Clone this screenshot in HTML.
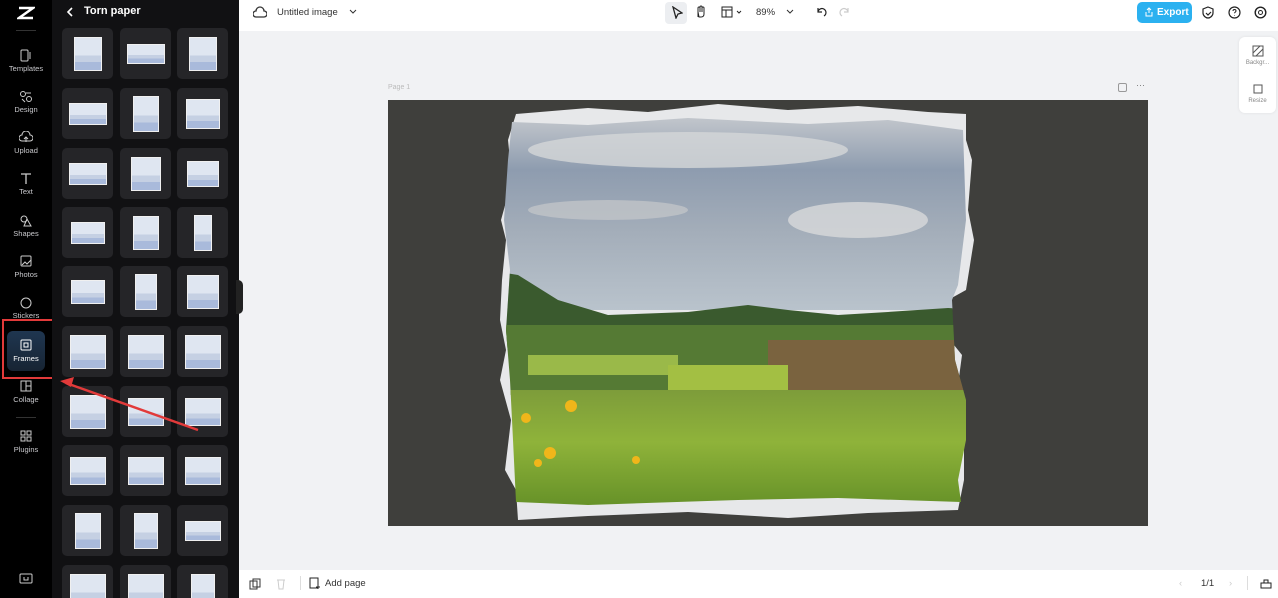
<!DOCTYPE html>
<html><head><meta charset="utf-8"><style>
*{margin:0;padding:0;box-sizing:border-box}
html{width:1278px;height:598px;overflow:hidden}
body{width:1278px;height:598px;overflow:hidden;background:#f1f2f4;font-family:"Liberation Sans",sans-serif;position:relative}
.rail{position:absolute;left:0;top:0;width:52px;height:598px;background:#000}
.panel{position:absolute;left:52px;top:0;width:187px;height:598px;background:#111113;overflow:hidden}
.ri{position:absolute;left:0;width:52px;text-align:center;color:#c8c8cc;font-size:7.5px}
.ri svg{display:block;margin:0 auto 2px}
.tile{position:absolute;width:51px;height:51px;background:#252528;border-radius:5px}
.tile i{position:absolute;background:linear-gradient(#dfe6f1 0 55%,#c5d0e3 55% 75%,#a9badb 75% 100%);border:1.5px solid #f0f0f0}
.top{position:absolute;left:239px;top:0;right:0;height:31px;background:#fff}
.bot{position:absolute;left:239px;top:570px;right:0;height:28px;background:#fff}
.t{position:absolute;font-size:9.5px;color:#333}
</style></head><body>
<div class="rail">
 <svg style="position:absolute;left:17px;top:6px" width="18" height="14" viewBox="0 0 18 14"><path d="M2 2h14L2 12h14" stroke="#fff" stroke-width="2.5" fill="none"/></svg>
 <div style="position:absolute;left:16px;top:30px;width:20px;height:1px;background:#333"></div>
 <div class="ri" style="top:49px"><svg width="14" height="13"><rect x="2" y="1" width="7" height="11" rx="1" stroke="#ccc" fill="none"/><path d="M11 3v7" stroke="#ccc"/></svg>Templates</div>
 <div class="ri" style="top:90px"><svg width="14" height="13"><circle cx="4" cy="4" r="2.5" stroke="#ccc" fill="none"/><circle cx="10" cy="9" r="2.5" stroke="#ccc" fill="none"/><path d="M7 3l5 0M3 9l3 3" stroke="#ccc"/></svg>Design</div>
 <div class="ri" style="top:131px"><svg width="14" height="13"><path d="M3 10a3 3 0 010-6 4 4 0 018 0 3 3 0 010 6zM7 11V6M5 8l2-2 2 2" stroke="#ccc" fill="none"/></svg>Upload</div>
 <div class="ri" style="top:172px"><svg width="14" height="13"><path d="M2 2h10M7 2v10" stroke="#ccc" stroke-width="1.3"/></svg>Text</div>
 <div class="ri" style="top:214px"><svg width="14" height="13"><circle cx="5" cy="5" r="3" stroke="#ccc" fill="none"/><path d="M8 5l4 7H5z" stroke="#ccc" fill="none"/></svg>Shapes</div>
 <div class="ri" style="top:255px"><svg width="14" height="13"><rect x="2" y="1" width="10" height="10" rx="1" stroke="#ccc" fill="none"/><path d="M3 10l3-3 2 2 4-4" stroke="#ccc" fill="none"/></svg>Photos</div>
 <div class="ri" style="top:296px"><svg width="14" height="13"><circle cx="7" cy="7" r="5" stroke="#ccc" fill="none"/></svg>Stickers</div>
 <div style="position:absolute;left:7px;top:331px;width:38px;height:40px;border-radius:6px;background:linear-gradient(#1f3650,#172433)"></div>
 <div class="ri" style="top:339px;color:#fff"><svg width="14" height="13"><rect x="2" y="1" width="10" height="10" rx="1" stroke="#fff" fill="none"/><rect x="5" y="4" width="4" height="4" stroke="#fff" fill="none"/></svg>Frames</div>
 <div style="position:absolute;left:2px;top:319px;width:60px;height:60px;border:2px solid #e23a3a"></div>
 <div class="ri" style="top:380px"><svg width="14" height="13"><rect x="2" y="1" width="10" height="10" stroke="#ccc" fill="none"/><path d="M7 1v10M7 6h5" stroke="#ccc"/></svg>Collage</div>
 <div style="position:absolute;left:16px;top:417px;width:20px;height:1px;background:#333"></div>
 <div class="ri" style="top:430px"><svg width="14" height="13"><rect x="2" y="1" width="4" height="4" stroke="#ccc" fill="none"/><rect x="8" y="1" width="4" height="4" stroke="#ccc" fill="none"/><rect x="2" y="7" width="4" height="4" stroke="#ccc" fill="none"/><rect x="8" y="7" width="4" height="4" stroke="#ccc" fill="none"/></svg>Plugins</div>
 <svg style="position:absolute;left:19px;top:573px" width="14" height="12"><rect x="1" y="1" width="12" height="9" rx="1" stroke="#ccc" fill="none"/><path d="M5 4v3h4V4" stroke="#ccc" fill="none"/></svg>
</div>
<div class="panel" id="panel">
 <svg style="position:absolute;left:14px;top:7px" width="8" height="10"><path d="M6 1L2 5l4 4" stroke="#fff" stroke-width="1.6" fill="none"/></svg>
 <div style="position:absolute;left:32px;top:5px;color:#fff;font-weight:bold;font-size:11px">Torn paper</div>
</div>
<div style="position:absolute;left:236px;top:280px;width:7px;height:34px;background:#222;border-radius:0 5px 5px 0"></div>
<svg style="position:absolute;left:52px;top:0" width="190" height="598"><path d="M146 430L14 383" stroke="#e23a3a" stroke-width="2.5"/><path d="M8 381l14-4-3 10z" fill="#e23a3a"/></svg>
<div class="top">
 <svg style="position:absolute;left:14px;top:6px" width="14" height="13"><path d="M3 11a3 3 0 010-6 4 4 0 018 0 3 3 0 010 6z" stroke="#333" stroke-width="1.3" fill="none"/></svg>
 <div class="t" style="left:38px;top:7px">Untitled image</div>
 <svg style="position:absolute;left:110px;top:9px" width="8" height="6"><path d="M1 1l3 3 3-3" stroke="#333" fill="none"/></svg>
 <div style="position:absolute;left:426px;top:2px;width:22px;height:22px;background:#eceef1;border-radius:4px"></div>
 <svg style="position:absolute;left:432px;top:6px" width="12" height="13"><path d="M2 1l9 6-4 1-2 4z" stroke="#222" stroke-width="1.3" fill="none"/></svg>
 <svg style="position:absolute;left:455px;top:5px" width="14" height="14"><path d="M4 12V6M4 7V3a1 1 0 012 0v4V2a1 1 0 012 0v5V3a1 1 0 012 0v6c0 2-1 3-3 3H5z" stroke="#222" fill="none"/></svg>
 <svg style="position:absolute;left:482px;top:6px" width="24" height="12"><rect x="1" y="1" width="10" height="10" stroke="#222" fill="none"/><path d="M1 4h10M5 4v7M16 5l2 2 2-2" stroke="#222" fill="none"/></svg>
 <div class="t" style="left:517px;top:7px">89%</div>
 <svg style="position:absolute;left:547px;top:9px" width="8" height="6"><path d="M1 1l3 3 3-3" stroke="#333" fill="none"/></svg>
 <svg style="position:absolute;left:576px;top:6px" width="12" height="12"><path d="M3 2v4h4M3 6a4 4 0 116 4" stroke="#222" stroke-width="1.2" fill="none"/></svg>
 <svg style="position:absolute;left:600px;top:6px" width="12" height="12"><path d="M9 2v4H5M9 6a4 4 0 10-6 4" stroke="#ccc" stroke-width="1.2" fill="none"/></svg>
 <div style="position:absolute;left:898px;top:2px;width:55px;height:21px;background:#2bb1f0;border-radius:5px;color:#fff;font-size:10px;font-weight:bold;padding:5px 0 0 20px">Export</div>
 <svg style="position:absolute;left:905px;top:7px" width="10" height="10"><path d="M2 5v4h6V5M5 1v5M3 3l2-2 2 2" stroke="#fff" fill="none"/></svg>
 <svg style="position:absolute;left:963px;top:6px" width="12" height="13"><path d="M6 1l5 2v4c0 3-3 5-5 5S1 10 1 7V3z M4 7l2 2 3-3" stroke="#222" stroke-width="1.2" fill="none"/></svg>
 <svg style="position:absolute;left:989px;top:6px" width="13" height="13"><circle cx="6.5" cy="6.5" r="5.5" stroke="#222" stroke-width="1.2" fill="none"/><path d="M5 5a1.5 1.5 0 113 0c0 1-1.5 1.2-1.5 2.3M6.5 9.5v.5" stroke="#222" fill="none"/></svg>
 <svg style="position:absolute;left:1015px;top:6px" width="13" height="13"><circle cx="6.5" cy="6.5" r="5.3" stroke="#222" stroke-width="1.4" fill="none"/><circle cx="6.5" cy="6.5" r="2" stroke="#222" fill="none"/></svg>
</div>
<div style="position:absolute;left:1239px;top:37px;width:37px;height:76px;background:#fff;border-radius:6px;box-shadow:0 0 3px rgba(0,0,0,.08)"></div>
<svg style="position:absolute;left:1252px;top:45px" width="12" height="12"><rect x="1" y="1" width="10" height="10" stroke="#555" fill="none"/><path d="M1 8l7-7M4 11l7-7" stroke="#555"/></svg>
<div style="position:absolute;left:1241px;top:60px;font-size:6px;color:#888;width:33px;text-align:center">Backgr...</div>
<svg style="position:absolute;left:1252px;top:83px" width="12" height="12"><rect x="2" y="2" width="8" height="8" stroke="#555" fill="none"/></svg>
<div style="position:absolute;left:1241px;top:98px;font-size:6px;color:#888;width:33px;text-align:center">Resize</div>
<div style="position:absolute;left:388px;top:84px;font-size:7px;color:#bbb">Page 1</div>
<div style="position:absolute;left:1118px;top:83px;width:9px;height:9px;border:1px solid #999;border-radius:2px"></div>
<div style="position:absolute;left:1136px;top:80px;font-size:9px;color:#777">···</div>
<svg style="position:absolute;left:388px;top:100px" width="760" height="426" viewBox="0 0 760 426">
 <defs>
  <linearGradient id="sky" x1="0" y1="0" x2="0" y2="1"><stop offset="0" stop-color="#c9ccd0"/><stop offset=".3" stop-color="#8e9caf"/><stop offset=".6" stop-color="#a3adb9"/><stop offset="1" stop-color="#b9c3cc"/></linearGradient>
  <linearGradient id="gr" x1="0" y1="0" x2="0" y2="1"><stop offset="0" stop-color="#7d9c3a"/><stop offset=".4" stop-color="#8fb33a"/><stop offset="1" stop-color="#5d8a24"/></linearGradient>
  <clipPath id="c"><path d="M124 22L200 25 300 18 420 24 500 20 575 30 578 120 570 185 564 200 567 260 578 300 578 340 570 380 573 402 450 398 350 400 200 405 128 402 125 340 122 280 118 230 122 170 116 120 120 60z"/></clipPath>
 </defs>
 <rect width="760" height="426" fill="#3f3f3c"/>
 <path d="M128 14L200 8 260 12 330 4 400 10 470 6 540 12 578 14 578 40 584 60 580 110 586 140 578 190 560 200 562 240 574 255 568 300 576 330 576 380 570 410 480 413 400 418 300 412 200 416 130 420 128 390 117 370 123 320 112 280 118 250 112 220 114 180 118 140 113 120 124 80 120 40z" fill="#e7e8ea"/>
 <g clip-path="url(#c)">
  <rect x="100" y="10" width="500" height="200" fill="url(#sky)"/>
  <ellipse cx="300" cy="50" rx="160" ry="18" fill="#d5d7d8" opacity=".8"/>
  <ellipse cx="470" cy="120" rx="70" ry="18" fill="#d8dadb" opacity=".8"/>
  <ellipse cx="220" cy="110" rx="80" ry="10" fill="#c0c4c8" opacity=".8"/>
  <path d="M100 170L130 175 170 200 220 215 300 212 360 205 400 210 450 215 500 212 560 208 600 210V250H100z" fill="#3a5a2e"/>
  <rect x="100" y="225" width="500" height="70" fill="#557a34"/>
  <rect x="140" y="255" width="150" height="20" fill="#9ab949"/>
  <rect x="380" y="240" width="200" height="50" fill="#8a5a45" opacity=".7"/>
  <rect x="280" y="265" width="120" height="30" fill="#a3bf43"/>
  <rect x="100" y="290" width="500" height="130" fill="url(#gr)"/>
  <circle cx="162" cy="353" r="6" fill="#f0b61a"/><circle cx="183" cy="306" r="6" fill="#f0b61a"/><circle cx="138" cy="318" r="5" fill="#f0b61a"/><circle cx="150" cy="363" r="4" fill="#f0b61a"/><circle cx="248" cy="360" r="4" fill="#f0b61a"/>
 </g>
</svg>
<div class="bot">
 <svg style="position:absolute;left:10px;top:8px" width="12" height="12"><rect x="1" y="3" width="7" height="8" stroke="#333" fill="none"/><rect x="4" y="1" width="7" height="8" stroke="#333" fill="none"/></svg>
 <svg style="position:absolute;left:37px;top:8px" width="10" height="12"><path d="M1 2h8M2 2l1 9h4l1-9" stroke="#ccc" fill="none"/></svg>
 <div style="position:absolute;left:61px;top:6px;width:1px;height:14px;background:#ddd"></div>
 <svg style="position:absolute;left:70px;top:7px" width="12" height="13"><rect x="1" y="1" width="8" height="10" stroke="#222" fill="none"/><path d="M9 8v4M7 10h4" stroke="#222"/></svg>
 <div class="t" style="left:86px;top:8px">Add page</div>
 <div class="t" style="left:940px;top:8px;color:#ccc">‹</div>
 <div class="t" style="left:962px;top:8px">1/1</div>
 <div class="t" style="left:990px;top:8px;color:#ccc">›</div>
 <div style="position:absolute;left:1008px;top:6px;width:1px;height:14px;background:#ddd"></div>
 <svg style="position:absolute;left:1021px;top:7px" width="12" height="12"><path d="M1 11h10V6H1zM4 6V3h4v3" stroke="#222" fill="none"/></svg>
</div>
<script>
var p=document.getElementById('panel');
var cols=[10,68,125],rows=[28,88,148,207,266,326,386,445,505,565];
var sz=[[28,34],[38,20],[28,34],[38,22],[26,36],[34,30],[38,22],[30,34],[32,26],[34,22],[26,34],[18,36],[34,24],[22,36],[32,34],[36,34],[36,34],[36,34],[36,34],[36,28],[36,28],[36,28],[36,28],[36,28],[26,36],[24,36],[36,20],[36,34],[36,34],[24,34]];
var k=0;rows.forEach(function(y){cols.forEach(function(x){var d=document.createElement('div');d.className='tile';d.style.left=x+'px';d.style.top=y+'px';var s=sz[k++%sz.length];var i=document.createElement('i');i.style.width=s[0]+'px';i.style.height=s[1]+'px';i.style.left=(51-s[0])/2+'px';i.style.top=(51-s[1])/2+'px';d.appendChild(i);p.appendChild(d);});});
</script>
</body></html>
